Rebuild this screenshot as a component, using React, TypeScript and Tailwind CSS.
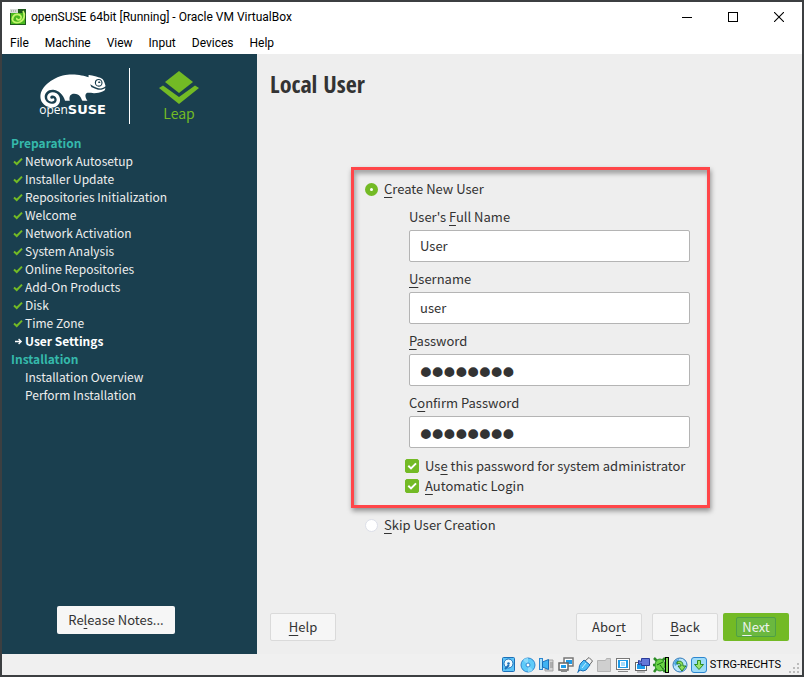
import { useState, type ReactNode } from "react";
import { FaSuse } from "react-icons/fa";

const SYSTEM = "font-['Roboto','Open_Sans',sans-serif]";
const INSTALLER = "font-['Noto_Sans_CJK_SC',sans-serif]";

/** Text with one underlined accelerator letter, marked by a leading "&". */
function Mnemonic({ text }: { text: string }) {
  const at = text.indexOf("&");
  return (
    <span>
      {text.slice(0, at)}
      <span className="underline decoration-1 underline-offset-[3px]">{text[at + 1]}</span>
      {text.slice(at + 2)}
    </span>
  );
}

function AppIcon() {
  return (
    <svg width="16" height="16" viewBox="0 0 16 16" aria-hidden="true">
      <rect width="16" height="16" fill="#1e5a1c" />
      <rect x="1" y="4" width="14" height="11" fill="#49b81f" />
      <path d="M13 2C15 5 15 11 10 13C5 15 1 12 3 8C5 4 12 5 11 9C10 12 6 11 7 9" fill="none" stroke="#c3f56b" strokeWidth="1.8" />
      <rect width="8" height="4" fill="#d8dcd8" />
      <path d="M1 2h6" stroke="#8a908a" strokeDasharray="1 1" />
    </svg>
  );
}

function TitleBar() {
  return (
    <header className="flex h-[30px] items-center bg-white pl-2">
      <AppIcon />
      <h1 className="flex-1 pl-[5px] text-[12px] leading-4 text-black">openSUSE 64bit [Running] - Oracle VM VirtualBox</h1>
      <button aria-label="Minimize" className="flex h-7 w-[46px] items-center justify-center">
        <svg width="10" height="10"><path d="M0 5.5h10" stroke="#000" /></svg>
      </button>
      <button aria-label="Maximize" className="flex h-7 w-[46px] items-center justify-center">
        <svg width="10" height="10"><rect x=".5" y=".5" width="9" height="9" fill="none" stroke="#000" /></svg>
      </button>
      <button aria-label="Close" className="flex h-7 w-[46px] items-center justify-center">
        <svg width="10" height="10"><path d="M0 0l10 10M10 0L0 10" stroke="#000" strokeWidth="1.1" /></svg>
      </button>
    </header>
  );
}

function MenuBar() {
  return (
    <nav className="flex h-[22px] items-center gap-4 bg-white pl-2 text-[12px] leading-4 text-black">
      {["File", "Machine", "View", "Input", "Devices", "Help"].map((m) => (
        <button key={m}>{m}</button>
      ))}
    </nav>
  );
}

function Branding() {
  return (
    <div className="flex h-[56px] items-center">
      <div className="flex w-[127px] justify-end pr-[23px]">
        <div className="flex flex-col items-center text-white">
          <FaSuse size={66} className="-mt-[16px] -mb-[22px]" />
          <span className="flex items-baseline leading-4">
            <span className="font-['Open_Sans',sans-serif] text-[12px]">open</span>
            <b className="font-['DejaVu_Sans',sans-serif] text-[13px] font-bold">SUSE</b>
          </span>
        </div>
      </div>
      <div className="h-full w-px bg-white" />
      <div className="ml-[29px] flex flex-col items-center text-[#73ba25]">
        <svg width="40" height="34" viewBox="0 -1 40 34" fill="currentColor" aria-hidden="true">
          <path d="M20 0L34 11L20 22L6 11Z" />
          <path d="M0 17L4 14.500L20 26L36 14.500L40 17L20 33Z" />
        </svg>
        <span className="text-[14px] leading-[18px]">Leap</span>
      </div>
    </div>
  );
}

const DONE = [
  "Network Autosetup",
  "Installer Update",
  "Repositories Initialization",
  "Welcome",
  "Network Activation",
  "System Analysis",
  "Online Repositories",
  "Add-On Products",
  "Disk",
  "Time Zone",
];

function Step({ icon, children }: { icon?: ReactNode; children: ReactNode }) {
  return (
    <li className="flex items-center">
      <span className="flex w-[14px] justify-center">{icon}</span>
      {children}
    </li>
  );
}

function Check() {
  return (
    <svg width="10" height="9" viewBox="0 0 10 9" aria-hidden="true">
      <path d="M1 4.6L3.7 7L9 1.6" fill="none" stroke="#73ba25" strokeWidth="2" />
    </svg>
  );
}

function Sidebar() {
  return (
    <aside className={`flex w-[255px] shrink-0 flex-col bg-[#1a3f4f] pt-[14px] pb-5 ${INSTALLER}`}>
      <Branding />
      <div className="mt-[10px] pl-[9px] text-[12px] leading-[18px] text-[#eeeeee]">
        <h2 className="font-bold text-[#35b9ab]">Preparation</h2>
        <ul>
          {DONE.map((s) => (
            <Step key={s} icon={<Check />}>{s}</Step>
          ))}
          <Step
            icon={
              <svg width="8" height="7" viewBox="0 0 8 7" className="ml-[2px]" aria-hidden="true">
                <path d="M0 3.5h6M3.6 1L6.2 3.5L3.6 6" fill="none" stroke="#fff" strokeWidth="1.3" />
              </svg>
            }
          >
            <b className="font-bold text-white">User Settings</b>
          </Step>
        </ul>
        <h2 className="font-bold text-[#35b9ab]">Installation</h2>
        <ul>
          <Step>Installation Overview</Step>
          <Step>Perform Installation</Step>
        </ul>
      </div>
      <button className="mt-auto ml-[55px] h-7 w-[118px] rounded-xs bg-[#f6f6f6] text-[13px] text-[#333]">
        <Mnemonic text="Re&lease Notes..." />
      </button>
    </aside>
  );
}

function Field({ id, label, value, secret }: { id: string; label: string; value: string; secret?: boolean }) {
  const [text, setText] = useState(value);
  return (
    <div className="flex flex-col">
      <label htmlFor={id} className="h-[30px] pt-[7px] text-[13px] leading-5">
        <Mnemonic text={label} />
      </label>
      <input
        id={id}
        type={secret ? "password" : "text"}
        value={text}
        onChange={(e) => setText(e.target.value)}
        className={`h-8 rounded-xs border border-[#b4b4b4] bg-white px-[10px] outline-none ${
          secret ? "pt-[3px] font-['DejaVu_Sans',sans-serif] text-[20px] [-webkit-text-stroke:4px_#333]" : "pb-[2px] text-[13px]"
        }`}
      />
    </div>
  );
}

function Tick({ id, label }: { id: string; label: string }) {
  return (
    <div className="flex h-5 items-center">
      <span className="grid h-[14px] w-[14px]">
        <input id={id} type="checkbox" defaultChecked className="peer col-start-1 row-start-1 appearance-none rounded-xs border border-[#ccc] bg-white checked:border-[#73ba25] checked:bg-[#73ba25]" />
        <svg className="pointer-events-none col-start-1 row-start-1 opacity-0 peer-checked:opacity-100" viewBox="0 0 14 14" aria-hidden="true">
          <path d="M3.3 6.8L6 9.4L11 4.4" fill="none" stroke="#fff" strokeWidth="2" />
        </svg>
      </span>
      <label htmlFor={id} className="pl-[6px] text-[13px] leading-5">
        <Mnemonic text={label} />
      </label>
    </div>
  );
}

function Choice({ id, label, checked }: { id: string; label: string; checked?: boolean }) {
  return (
    <div className="flex h-5 items-center">
      <input
        id={id}
        type="radio"
        name="mode"
        defaultChecked={checked}
        className="h-[13px] w-[13px] appearance-none rounded-full border border-[#dcdfe8] bg-white checked:border-[5px] checked:border-[#73ba25]"
      />
      <label htmlFor={id} className="pl-[6px] text-[13px] leading-5">
        <Mnemonic text={label} />
      </label>
    </div>
  );
}

function FlatButton({ text }: { text: string }) {
  return (
    <button className="h-7 w-[66px] rounded-xs border border-[#dadada] bg-[#f6f6f6] text-[13px]">
      <Mnemonic text={text} />
    </button>
  );
}

function Main() {
  return (
    <main className={`flex flex-1 flex-col bg-[#eeeeee] px-[13px] pb-[13px] text-[#333] ${INSTALLER}`}>
      <h2 className="pt-[14px] font-['Open_Sans_Condensed','Noto_Sans_Condensed','Liberation_Sans_Narrow',sans-serif] text-[24px] leading-8 font-bold">Local User</h2>
      <form className="mx-auto mt-[67px] w-[361px] pl-[2px]" onSubmit={(e) => e.preventDefault()}>
        <div className="border-3 border-[#ff4649] px-[11px] py-[9px] shadow-[1px_3px_5px_rgba(0,0,0,0.4),inset_2px_4px_4px_rgba(0,0,0,0.3)]">
          <Choice id="create" label="&Create New User" checked />
          <div className="pt-px pr-[6px] pl-11">
            <Field id="full" label="User's &Full Name" value="User" />
            <Field id="user" label="&Username" value="user" />
            <Field id="pass" label="&Password" value="password" secret />
            <Field id="confirm" label="C&onfirm Password" value="password" secret />
          </div>
          <div className="mt-2 pl-10">
            <Tick id="root-pass" label="Us&e this password for system administrator" />
            <Tick id="auto" label="&Automatic Login" />
          </div>
        </div>
        <div className="mt-[7px] pl-[14px]">
          <Choice id="skip" label="&Skip User Creation" />
        </div>
      </form>
      <div className="mt-auto flex">
        <FlatButton text="&Help" />
        <div className="ml-auto flex">
          <FlatButton text="Abo&rt" />
          <div className="ml-[10px]">
            <FlatButton text="&Back" />
          </div>
          <button className="ml-[5px] flex h-7 w-[66px] items-center justify-center rounded-xs bg-[#73ba25] text-[13px] text-[#eef3ee]">
            <span className="h-5 w-10 rounded-xs border border-[#4fa045] bg-[#6bb83f] leading-[18px]">
              <Mnemonic text="&Next" />
            </span>
          </button>
        </div>
      </div>
    </main>
  );
}

const INDICATORS: [string, ReactNode][] = [
  ["Hard disks", <>
    <rect x="1.5" y=".5" width="12" height="14" rx="1" fill="#5cc4f7" stroke="#1b6fb8" />
    <circle cx="7.5" cy="6.5" r="4.5" fill="#eefaff" stroke="#1b6fb8" />
    <circle cx="7.5" cy="6.5" r="1.3" fill="#1b6fb8" />
    <path d="M4 12l4-4" stroke="#1b6fb8" strokeWidth="2" />
  </>],
  ["Optical drives", <>
    <circle cx="8" cy="8" r="7" fill="#5fcbf9" stroke="#2d86cf" />
    <path d="M8 8L3 3A7 7 0 0 1 8 1zM8 8l5 5a7 7 0 0 1-5 2z" fill="#8adafc" />
    <circle cx="8" cy="8" r="2" fill="#fff" stroke="#2d86cf" />
  </>],
  ["Audio", <>
    <path d="M9 3h5v11H6v-2h3z" fill="#d4d4d4" stroke="#a5a5a5" />
    <path d="M11 6h3M11 8h3M11 10h3" stroke="#888" />
    <rect x=".5" y="1.5" width="3" height="11" fill="#a5e0fb" stroke="#2d86cf" />
    <path d="M3.500 5L9.500 2.500v10L3.500 10z" fill="#3fb2f2" stroke="#1b6fb8" />
  </>],
  ["Network", <>
    <rect x="6" y="1" width="9" height="8" fill="#fff" stroke="#777" strokeWidth="1.500" />
    <rect x="8" y="3" width="6" height="4" fill="#1e9be8" />
    <rect x="1" y="6" width="9" height="7" fill="#fff" stroke="#666" strokeWidth="1.500" />
    <rect x="3" y="8" width="5" height="3" fill="#1e9be8" />
    <path d="M3 14.500h6" stroke="#888" />
  </>],
  ["USB", <>
    <path d="M8 4l4-3.500l3.500 3.500l-3 4z" fill="#f2f2f2" stroke="#666" />
    <path d="M7 3l6 5L9 13Q6 15 3 13L.8 15.500L2 12Q2 8 4 6z" fill="#4cbcf5" stroke="#1b6fb8" />
    <path d="M5 11l4-5" stroke="#c7efff" />
  </>],
  ["Shared folders", <path d="M1.500 3.500h8l1-2h4v13h-13z" fill="#cfcfcf" stroke="#b3b3b3" />],
  ["Display", <>
    <rect x="1.500" y="1.500" width="13" height="11" fill="#fff" stroke="#777" />
    <rect x="3" y="3" width="10" height="8" fill="#1e9be8" />
    <rect x="5.500" y="4.500" width="5" height="5" fill="#a5dcfb" stroke="#fff" />
    <path d="M3 14.500h10" stroke="#888" />
  </>],
  ["Recording", <>
    <rect x="1.500" y="5.500" width="11" height="8" fill="#fff" stroke="#666" />
    <rect x="3" y="7" width="8" height="5" fill="#1e9be8" />
    <path d="M3 15h8" stroke="#888" />
    <path d="M4.500 3.500l3 1v-3h8v7h-8v-2l-3 1z" fill="#6478d8" stroke="#2a3b9a" />
  </>],
  ["Processor", <>
    <path d="M1 1l3 3M12 1L9 4M1 15l3-4M12 15l-3-4M0 8h3" stroke="#2b8c25" strokeWidth="2.500" />
    <ellipse cx="7" cy="8" rx="5" ry="6" fill="#6ad445" stroke="#2b8c25" />
    <path d="M4 8l6-3M7 8l3 4" stroke="#176b12" />
    <rect x="12.500" y=".5" width="3" height="15" fill="#7ddb4f" stroke="#000" />
  </>],
  ["Mouse integration", <>
    <circle cx="8" cy="8" r="7" fill="#b8e4fb" stroke="#2d77b8" />
    <path d="M4 3l3-1l-1 5l-3 2l-1-3z" fill="#4aa6e0" />
    <path d="M5 5C9 3 11 5 11 9h3L10 14L6 9h3C9 7 8 6 5 7z" fill="#8fe05c" stroke="#257d1e" />
  </>],
  ["Keyboard", <>
    <rect x=".5" y=".5" width="15" height="15" rx="2.500" fill="#9edcf9" stroke="#2d86cf" />
    <path d="M6.500 3.500h3v4h3L8 12.500L3.500 7.500h3z" fill="#9be36a" stroke="#2b8c25" />
  </>],
];

function StatusBar() {
  return (
    <footer className="flex h-[21px] items-center justify-end gap-[3px] bg-[#f0f0f0]">
      {INDICATORS.map(([name, art]) => (
        <svg key={name} width="16" height="16" viewBox="0 0 16 16" role="img" aria-label={name}>{art}</svg>
      ))}
      <span className="text-[11px] leading-4 text-black">STRG-RECHTS</span>
      <svg width="18" height="16" viewBox="2 0 18 16" fill="#bcbcbc" aria-hidden="true">
        <path d="M15 6h2v2h-2zM15 10h2v2h-2zM15 14h2v2h-2zM11 10h2v2h-2zM11 14h2v2h-2zM7 14h2v2h-2z" />
      </svg>
    </footer>
  );
}

export default function App() {
  return (
    <div className={`flex min-h-screen flex-col border-2 border-[#3c3f41] bg-[#f0f0f0] ${SYSTEM}`}>
      <TitleBar />
      <MenuBar />
      <div className="flex flex-1">
        <Sidebar />
        <Main />
      </div>
      <StatusBar />
    </div>
  );
}
